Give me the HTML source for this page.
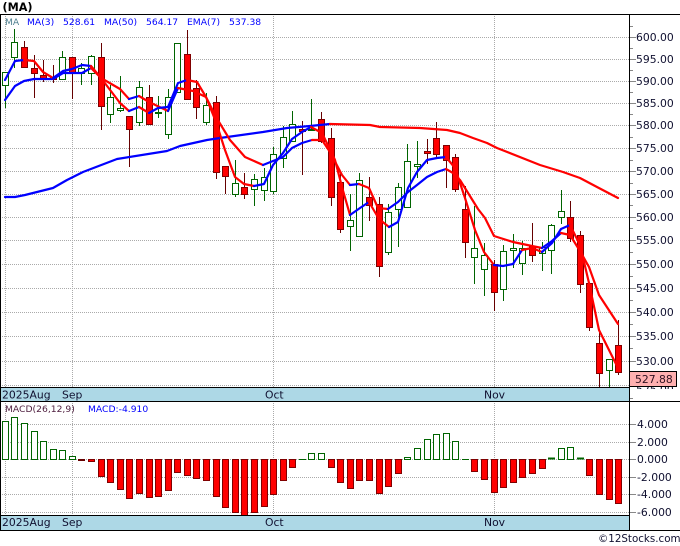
<!DOCTYPE html>
<html><head><meta charset="utf-8"><title>MA</title>
<style>
html,body{margin:0;padding:0;background:#fff;width:680px;height:546px;overflow:hidden}
svg{display:block}
text{font-family:"DejaVu Sans","Liberation Sans",sans-serif}
.g{stroke:#aaa;stroke-width:1;stroke-dasharray:1 1;fill:none;shape-rendering:crispEdges}
.k{stroke:#000;stroke-width:1;fill:none;shape-rendering:crispEdges}
.t{stroke:#888;stroke-width:1;fill:none;shape-rendering:crispEdges}
.gw{stroke:#006400;stroke-width:1;fill:none;shape-rendering:crispEdges}
.rw{stroke:#660000;stroke-width:1;fill:none;shape-rendering:crispEdges}
.gb{stroke:#006400;stroke-width:1;fill:#fff;shape-rendering:crispEdges}
.rb{stroke:#800000;stroke-width:1;fill:#f00;shape-rendering:crispEdges}
.lr{stroke:#f00;stroke-width:2.2;fill:none;stroke-linejoin:round;stroke-linecap:round}
.lb{stroke:#00f;stroke-width:2.2;fill:none;stroke-linejoin:round;stroke-linecap:round}
.p{font-size:10.8px;fill:#101030}
.l{font-size:9.2px;fill:#00f}
</style></head><body>
<svg width="680" height="546" viewBox="0 0 680 546" xmlns="http://www.w3.org/2000/svg">
<rect width="680" height="546" fill="#fff"/>
<text x="2.5" y="11" style="font-size:11.2px;font-weight:bold;fill:#000">(MA)</text>

<path class="g" d="M0 37.5H629M0 59.5H629M0 81.5H629M0 103.5H629M0 125.5H629M0 148.5H629M0 171.5H629M0 194.5H629M0 217.5H629M0 240.5H629M0 264.5H629M0 288.5H629M0 312.5H629M0 336.5H629M0 361.5H629M0 385.5H629"/>
<path class="g" d="M5.5 14V387M72.5 14V387M273.5 14V387M494.5 14V387"/>
<path class="g" d="M0 424.5H629M0 442.5H629M0 459.5H629M0 477.5H629M0 494.5H629M0 512.5H629"/>
<path class="g" d="M5.5 401V515M72.5 401V515M273.5 401V515M494.5 401V515"/>

<path class="gw" d="M5.5 72V108M14.5 29V68M62.5 51V79M81.5 63V85M91.5 55V85M110.5 85V123M120.5 76V112M139.5 81V126M158.5 96V118M168.5 89V139M177.5 43V92M206.5 93V125M235.5 160V197M254.5 174V206M264.5 168V201M273.5 147V194M283.5 126V168M292.5 111V142M311.5 99V131M350.5 194V251M359.5 173V236M388.5 204V255M398.5 183V247M407.5 144V207M417.5 141V178M474.5 206V284M484.5 243V296M503.5 245V301M513.5 234V268M522.5 241V275M542.5 242V271M551.5 224V274M561.5 190V224M609.5 359V387"/>
<path class="rw" d="M24.5 41V68M34.5 55V98M43.5 60V82M53.5 65V83M72.5 57V99M101.5 43V130M129.5 116V167M149.5 85V124M187.5 30V99M196.5 80V119M216.5 96V179M225.5 166V194M244.5 173V199M302.5 121V175M321.5 112V143M331.5 128V206M340.5 173V233M369.5 177V221M379.5 197V277M427.5 139V164M436.5 122V158M446.5 145V188M455.5 154V192M465.5 186V258M494.5 260V311M532.5 223V262M570.5 201V242M580.5 231V293M589.5 283V331M599.5 332V387M618.5 320V375"/>
<path class="gb" d="M2.5 72.5h6v13h-6zM11.5 42.5h6v15h-6zM59.5 57.5h6v22h-6zM78.5 68.5h6v5h-6zM88.5 56.5h6v17h-6zM107.5 97.5h6v17h-6zM117.5 108.5h6v2h-6zM136.5 87.5h6v35h-6zM155.5 112.5h6v1h-6zM165.5 97.5h6v37h-6zM174.5 43.5h6v49h-6zM203.5 105.5h6v17h-6zM232.5 183.5h6v11h-6zM251.5 179.5h6v10h-6zM261.5 177.5h6v13h-6zM270.5 154.5h6v37h-6zM280.5 137.5h6v21h-6zM289.5 124.5h6v17h-6zM308.5 129.5h6v1h-6zM347.5 220.5h6v6h-6zM356.5 180.5h6v56h-6zM385.5 212.5h6v40h-6zM395.5 187.5h6v22h-6zM404.5 161.5h6v46h-6zM414.5 164.5h6v2h-6zM471.5 248.5h6v9h-6zM481.5 255.5h6v14h-6zM500.5 251.5h6v38h-6zM510.5 248.5h6v2h-6zM519.5 248.5h6v15h-6zM539.5 247.5h6v6h-6zM548.5 225.5h6v25h-6zM558.5 211.5h6v6h-6zM606.5 359.5h6v11h-6z"/>
<path class="rb" d="M21.5 47.5h6v20h-6zM31.5 68.5h6v5h-6zM40.5 75.5h6v4h-6zM50.5 77.5h6v2h-6zM69.5 57.5h6v15h-6zM98.5 57.5h6v49h-6zM126.5 116.5h6v13h-6zM146.5 97.5h6v27h-6zM184.5 54.5h6v45h-6zM193.5 88.5h6v19h-6zM213.5 102.5h6v70h-6zM222.5 166.5h6v10h-6zM241.5 187.5h6v7h-6zM299.5 129.5h6v2h-6zM318.5 119.5h6v22h-6zM328.5 138.5h6v59h-6zM337.5 182.5h6v47h-6zM366.5 197.5h6v8h-6zM376.5 204.5h6v62h-6zM424.5 151.5h6v2h-6zM433.5 138.5h6v16h-6zM443.5 145.5h6v15h-6zM452.5 157.5h6v32h-6zM462.5 209.5h6v33h-6zM491.5 264.5h6v28h-6zM529.5 246.5h6v9h-6zM567.5 217.5h6v21h-6zM577.5 235.5h6v49h-6zM586.5 283.5h6v44h-6zM596.5 343.5h6v30h-6zM615.5 345.5h6v27h-6z"/>

<!-- MA50 -->
<polyline class="lb" points="5,197 15,197 25,195 53,188 67,180 83,172 117,159 167,151 180,146 207,140 220,138 263,132 287,128 310,126 330,124"/>
<polyline class="lr" points="330,124 370,125 380,127 420,128 447,130 460,133 473,138 487,143 497,148 540,165 563,172 580,178 597,187 618,198"/>
<!-- EMA7 -->
<polyline class="lb" points="5,100 15,86 24,81 34,79 53,79 63,73 82,73 91,68"/>
<polyline class="lr" points="91,68 101,78 120,89 129,99"/>
<polyline class="lb" points="129,99 139,96"/>
<polyline class="lr" points="139,96 149,102 168,111"/>
<polyline class="lb" points="168,111 178,88"/>
<polyline class="lr" points="178,88 193,91 206,97 216,117 230,140 245,157 263,165"/>
<polyline class="lb" points="263,165 273,161 283,157 292,148 302,143 312,140"/>
<polyline class="lr" points="312,140 322,140 330,152 342,175 350,185"/>
<polyline class="lb" points="350,185 359,184"/>
<polyline class="lr" points="359,184 369,188 378,208 388,209"/>
<polyline class="lb" points="388,209 398,202 408,192 417,185 427,177 437,172 446,169"/>
<polyline class="lr" points="446,169 453,173 460,180 478,209 485,218 494,236 513,242 532,246 542,248"/>
<polyline class="lb" points="542,248 552,241 561,233"/>
<polyline class="lr" points="561,233 570,235 580,251 589,267 599,295 618,324"/>
<!-- MA3 -->
<polyline class="lb" points="5,80 15,61 24,60"/>
<polyline class="lr" points="24,60 34,61 43,72 53,78"/>
<polyline class="lb" points="53,78 63,71 72,69 82,65 91,66"/>
<polyline class="lr" points="91,66 101,78 120,103 129,111"/>
<polyline class="lb" points="129,111 139,107"/>
<polyline class="lr" points="139,107 149,113"/>
<polyline class="lb" points="149,113 158,108 168,107 178,83 187,80"/>
<polyline class="lr" points="187,80 197,82 206,97 216,122 225,150 235,177 244,184 254,186"/>
<polyline class="lb" points="254,186 264,184 273,165 283,153 292,139 302,132 311,127"/>
<polyline class="lr" points="311,127 322,133 335,160 342,187 350,215"/>
<polyline class="lb" points="350,215 360,208 369,202"/>
<polyline class="lr" points="369,202 379,219 389,227"/>
<polyline class="lb" points="389,227 398,222 408,188 417,172 427,160 437,158 446,157"/>
<polyline class="lr" points="446,157 455,168 465,198 475,230 484,252 494,265"/>
<polyline class="lb" points="494,265 503,266 513,264 522,250"/>
<polyline class="lr" points="522,250 532,248 542,252"/>
<polyline class="lb" points="542,252 552,243 561,229 570,225"/>
<polyline class="lr" points="570,225 580,245 589,283 599,330 609,350 618,368"/>

<!-- MACD bars -->
<path class="gb" d="M2.5 421.5h6v38h-6zM11.5 417.5h6v42h-6zM21.5 423.5h6v36h-6zM31.5 431.5h6v28h-6zM40.5 441.5h6v18h-6zM50.5 449.5h6v10h-6zM59.5 450.5h6v9h-6zM69.5 456.5h6v3h-6zM308.5 453.5h6v6h-6zM318.5 453.5h6v6h-6zM404.5 457.5h6v2h-6zM414.5 448.5h6v11h-6zM424.5 439.5h6v20h-6zM433.5 434.5h6v25h-6zM443.5 433.5h6v26h-6zM452.5 441.5h6v18h-6zM558.5 448.5h6v11h-6zM567.5 447.5h6v12h-6z"/>
<path class="gw" d="M299 459.5h7M462 459.5h7"/>
<path stroke="#006400" stroke-width="2" fill="none" d="M548 458.5h7M577 458.5h7"/>
<path stroke="#660000" stroke-width="2" fill="none" d="M78 460h7"/>
<path class="rb" d="M88.5 459.5h6v2h-6zM98.5 459.5h6v17h-6zM107.5 459.5h6v23h-6zM117.5 459.5h6v30h-6zM126.5 459.5h6v39h-6zM136.5 459.5h6v34h-6zM146.5 459.5h6v38h-6zM155.5 459.5h6v37h-6zM165.5 459.5h6v31h-6zM174.5 459.5h6v13h-6zM184.5 459.5h6v16h-6zM193.5 459.5h6v19h-6zM203.5 459.5h6v21h-6zM213.5 459.5h6v37h-6zM222.5 459.5h6v48h-6zM232.5 459.5h6v53h-6zM241.5 459.5h6v56h-6zM251.5 459.5h6v53h-6zM261.5 459.5h6v47h-6zM270.5 459.5h6v35h-6zM280.5 459.5h6v21h-6zM289.5 459.5h6v8h-6zM328.5 459.5h6v8h-6zM337.5 459.5h6v23h-6zM347.5 459.5h6v29h-6zM356.5 459.5h6v21h-6zM366.5 459.5h6v21h-6zM376.5 459.5h6v34h-6zM385.5 459.5h6v27h-6zM395.5 459.5h6v14h-6zM471.5 459.5h6v12h-6zM481.5 459.5h6v20h-6zM491.5 459.5h6v33h-6zM500.5 459.5h6v28h-6zM510.5 459.5h6v23h-6zM519.5 459.5h6v18h-6zM529.5 459.5h6v14h-6zM539.5 459.5h6v9h-6zM586.5 459.5h6v16h-6zM596.5 459.5h6v35h-6zM606.5 459.5h6v40h-6zM615.5 459.5h6v44h-6z"/>

<!-- time bars -->
<rect x="0" y="387" width="629" height="14" fill="#add8e6"/>
<rect x="0" y="515" width="629" height="15" fill="#add8e6"/>
<path class="k" d="M0 14.5H680M0 387.5H629M0 401.5H680M0 515.5H629M0 530.5H680M629.5 14V530M0.5 14V530"/>

<!-- ticks -->
<path class="t" d="M630 37.5h6M630 59.5h6M630 81.5h6M630 103.5h6M630 125.5h6M630 148.5h6M630 171.5h6M630 194.5h6M630 217.5h6M630 240.5h6M630 264.5h6M630 288.5h6M630 312.5h6M630 336.5h6M630 361.5h6M630 424.5h6M630 442.5h6M630 459.5h6M630 477.5h6M630 494.5h6M630 512.5h6"/>
<path class="t" d="M630 26.5h3M630 48.5h3M630 70.5h3M630 92.5h3M630 114.5h3M630 137.5h3M630 160.5h3M630 183.5h3M630 205.5h3M630 228.5h3M630 252.5h3M630 276.5h3M630 300.5h3M630 324.5h3M630 348.5h3"/>

<!-- axis labels -->
<text class="p" x="636" y="41">600.00</text>
<text class="p" x="636" y="63">595.00</text>
<text class="p" x="636" y="85">590.00</text>
<text class="p" x="636" y="107">585.00</text>
<text class="p" x="636" y="129">580.00</text>
<text class="p" x="636" y="152">575.00</text>
<text class="p" x="636" y="175">570.00</text>
<text class="p" x="636" y="198">565.00</text>
<text class="p" x="636" y="221">560.00</text>
<text class="p" x="636" y="244">555.00</text>
<text class="p" x="636" y="268">550.00</text>
<text class="p" x="636" y="292">545.00</text>
<text class="p" x="636" y="316">540.00</text>
<text class="p" x="636" y="340">535.00</text>
<text class="p" x="636" y="365">530.00</text>
<text class="p" x="636" y="393">525.00</text>
<text class="p" x="637" y="428">4.000</text>
<text class="p" x="637" y="446">2.000</text>
<text class="p" x="637" y="463">0.000</text>
<text class="p" x="637" y="481">-2.000</text>
<text class="p" x="637" y="498">-4.000</text>
<text class="p" x="637" y="516">-6.000</text>
<rect x="630" y="389" width="50" height="12" fill="#fff"/>
<path class="t" d="M630 398.5h3"/>
<path class="k" d="M630 401.5H680"/>
<rect x="629.5" y="371.5" width="47" height="15" fill="#ffb0b0" stroke="#000" stroke-width="1" shape-rendering="crispEdges"/>
<text class="p" x="635" y="383" style="font-size:10.8px;fill:#301020">527.88</text>

<!-- time labels -->
<g style="font-size:10.8px;fill:#101030">
<text x="2" y="398.5">2025Aug</text><text x="62" y="398.5">Sep</text><text x="265" y="398.5">Oct</text><text x="484" y="398.5">Nov</text>
<text x="2" y="526">2025Aug</text><text x="62" y="526">Sep</text><text x="265" y="526">Oct</text><text x="484" y="526">Nov</text>
</g>

<!-- legends -->
<text class="l" x="5" y="25" style="fill:#4f8090">MA</text>
<text class="l" x="27" y="25">MA(3)</text>
<text class="l" x="63" y="25">528.61</text>
<text class="l" x="104" y="25">MA(50)</text>
<text class="l" x="146" y="25">564.17</text>
<text class="l" x="187" y="25">EMA(7)</text>
<text class="l" x="229" y="25">537.38</text>
<text class="l" x="5" y="412" style="fill:#502040">MACD(26,12,9)</text>
<text class="l" x="88" y="412">MACD:-4.910</text>

<text x="598" y="542" style="font-size:10.3px;fill:#101030">©12Stocks.com</text>
</svg>
</body></html>
